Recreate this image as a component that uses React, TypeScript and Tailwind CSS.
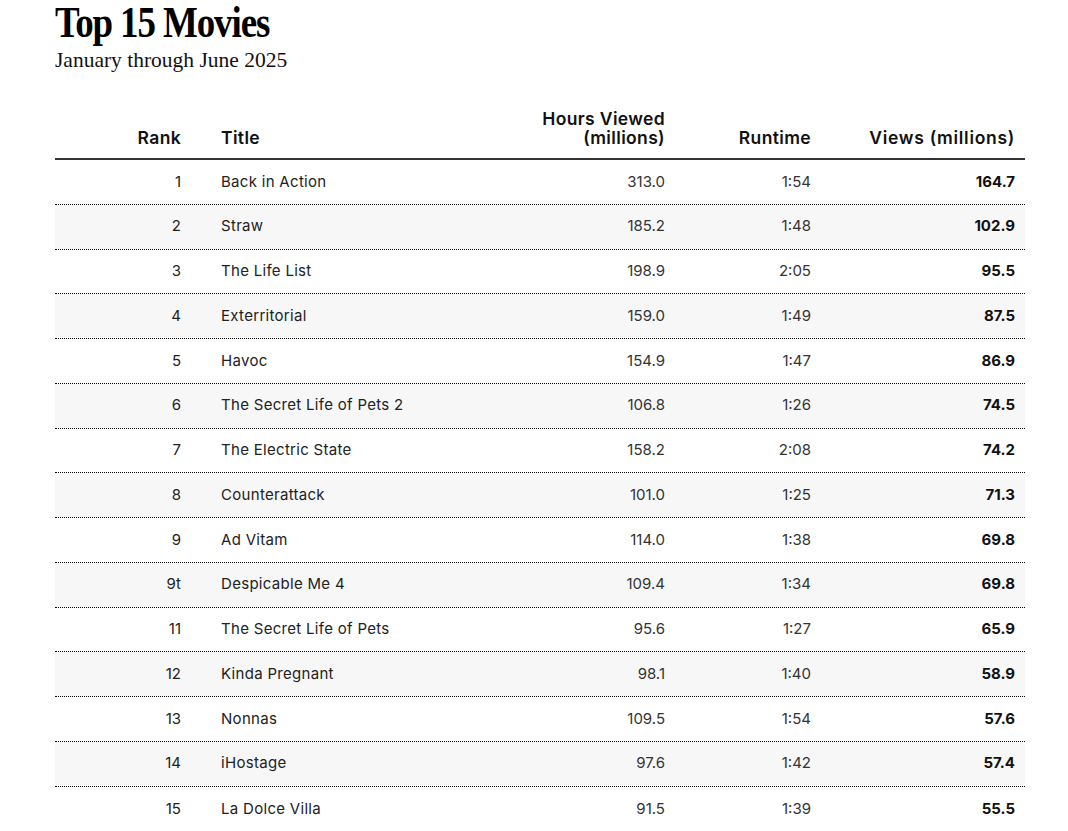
import React from "react";

const rows: [string, string, string, string, string][] = [
  ["1", "Back in Action", "313.0", "1:54", "164.7"],
  ["2", "Straw", "185.2", "1:48", "102.9"],
  ["3", "The Life List", "198.9", "2:05", "95.5"],
  ["4", "Exterritorial", "159.0", "1:49", "87.5"],
  ["5", "Havoc", "154.9", "1:47", "86.9"],
  ["6", "The Secret Life of Pets 2", "106.8", "1:26", "74.5"],
  ["7", "The Electric State", "158.2", "2:08", "74.2"],
  ["8", "Counterattack", "101.0", "1:25", "71.3"],
  ["9", "Ad Vitam", "114.0", "1:38", "69.8"],
  ["9t", "Despicable Me 4", "109.4", "1:34", "69.8"],
  ["11", "The Secret Life of Pets", "95.6", "1:27", "65.9"],
  ["12", "Kinda Pregnant", "98.1", "1:40", "58.9"],
  ["13", "Nonnas", "109.5", "1:54", "57.6"],
  ["14", "iHostage", "97.6", "1:42", "57.4"],
  ["15", "La Dolce Villa", "91.5", "1:39", "55.5"],
];

export default function App() {
  return (
    <div className="min-h-screen bg-white pl-[55px] pr-[43px] text-[#222]" style={{ fontFamily: "Inter, 'Noto Sans', sans-serif" }}>
      <div className="pt-[1px] h-[43px]">
        <h1
          className="inline-block origin-left scale-x-[0.84] text-[44px] leading-[44px] font-bold tracking-[-0.03em] text-black whitespace-nowrap"
          style={{ fontFamily: "'Liberation Serif', serif" }}
        >
          Top 15 Movies
        </h1>
      </div>
      <p
        className="mt-[4px] text-[21.5px] leading-[26px] text-[#111]"
        style={{ fontFamily: "'Liberation Serif', serif" }}
      >
        January through June 2025
      </p>
      <div className="mt-[36px] w-[970px]">
        <div className="grid grid-cols-[126px_339px_145px_146px_204px] items-end pr-[10px] pb-[11px] border-b-2 border-[#333] text-[17.5px] leading-[19px] font-semibold tracking-[0.02em] text-[#111]">
          <div className="text-right">Rank</div>
          <div className="pl-[40px]">Title</div>
          <div className="text-right">
            Hours Viewed
            <br />
            (millions)
          </div>
          <div className="text-right">Runtime</div>
          <div className="text-right tracking-[0.04em]">Views (millions)</div>
        </div>
        {rows.map((r, i) => (
          <div
            key={i}
            className={`grid grid-cols-[126px_339px_145px_146px_204px] items-center pr-[10px] h-[44.75px] text-[15px] ${
              i < rows.length - 1 ? "border-b border-dotted border-black" : ""
            } ${i % 2 === 1 ? "bg-[#f7f7f7]" : "bg-white"}`}
          >
            <div className="text-right">{r[0]}</div>
            <div className="pl-[40px] tracking-[0.02em]">{r[1]}</div>
            <div className="text-right text-[#333]">{r[2]}</div>
            <div className="text-right text-[#333]">{r[3]}</div>
            <div className="text-right font-bold text-[#111]">{r[4]}</div>
          </div>
        ))}
      </div>
    </div>
  );
}
